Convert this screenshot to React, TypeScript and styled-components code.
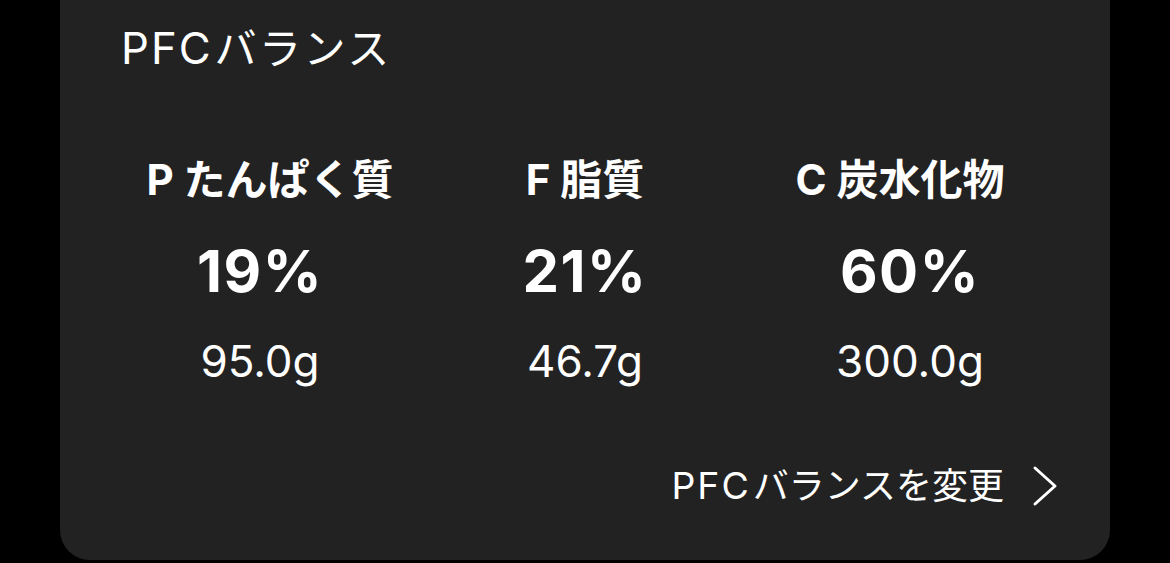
import React from 'react';
import styled, { createGlobalStyle } from 'styled-components';

const GlobalStyle = createGlobalStyle`
  html, body {
    margin: 0;
    padding: 0;
    background: #000;
  }
  body {
    font-family: Inter, "Noto Sans CJK JP", sans-serif;
    color: #fff;
    overflow: hidden;
  }
`;

type Macro = {
  label: string;
  percent: string;
  grams: string;
};

const macros: Macro[] = [
  { label: 'P たんぱく質', percent: '19%', grams: '95.0g' },
  { label: 'F 脂質', percent: '21%', grams: '46.7g' },
  { label: 'C 炭水化物', percent: '60%', grams: '300.0g' },
];

const App: React.FC = () => {
  return (
    <>
      <GlobalStyle />
      <Card>
        <Title>
          <Latin>PFC</Latin>バランス
        </Title>
        <Row $col={315} $top={88}>
          {macros.map((m) => (
            <Label key={m.label}>{m.label}</Label>
          ))}
        </Row>
        <Row $col={325} $top={41}>
          {macros.map((m) => (
            <Percent key={m.label}>{m.percent}</Percent>
          ))}
        </Row>
        <Row $col={325} $top={39}>
          {macros.map((m) => (
            <Grams key={m.label}>{m.grams}</Grams>
          ))}
        </Row>
        <Footer>
          <ChangeLink>
            <span>
              <Latin>PFC</Latin>バランスを変更
            </span>
            <Chevron width="28" height="44" viewBox="0 0 28 44">
              <polyline points="4,4 24,22 4,40" />
            </Chevron>
          </ChangeLink>
        </Footer>
      </Card>
    </>
  );
};

const Card = styled.div`
  box-sizing: border-box;
  width: 1050px;
  margin: -40px 0 0 60px;
  padding: 67px 0 52px;
  background: #222222;
  border-radius: 30px;
`;

const Title = styled.h1`
  margin: 0 0 0 61px;
  font-size: 42px;
  font-weight: 400;
  line-height: 1;
  letter-spacing: 2.5px;
`;

const Latin = styled.span`
  font-size: 1.04em;
  letter-spacing: 2px;
  margin-right: 2px;
`;

const Row = styled.div<{ $col: number; $top: number }>`
  display: grid;
  grid-template-columns: repeat(3, ${(p) => p.$col}px);
  justify-content: center;
  justify-items: center;
  margin-top: ${(p) => p.$top}px;
`;

const Label = styled.div`
  font-size: 42px;
  font-weight: 700;
  line-height: 1;
`;

const Percent = styled.div`
  font-size: 58px;
  font-weight: 700;
  line-height: 1;
  letter-spacing: 1.5px;
`;

const Grams = styled.div`
  font-size: 44px;
  font-weight: 400;
  line-height: 1;
`;

const Footer = styled.div`
  display: flex;
  justify-content: flex-end;
  margin: 81px 51px 0 0;
`;

const ChangeLink = styled.div`
  display: flex;
  align-items: center;
  gap: 27px;
  font-size: 36px;
  line-height: 1;
`;

const Chevron = styled.svg`
  fill: none;
  stroke: #fff;
  stroke-width: 3;
  stroke-linecap: round;
  stroke-linejoin: round;
`;

export default App;
